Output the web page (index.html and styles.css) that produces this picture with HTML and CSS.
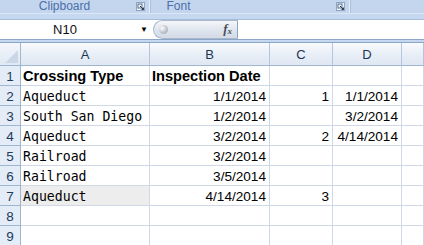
FILE: index.html
```html
<!DOCTYPE html>
<html lang="en">
  <head>
    <meta charset="UTF-8" />
    <meta name="viewport" content="width=device-width, initial-scale=1.0" />
    <title>Book1 - Excel</title>
    <link rel="stylesheet" href="styles.css">
  </head>
  <body>
    <!-- ribbon group labels -->
    <div class="ribbon">
      <div class="group clipboard">
        <span class="group-name">Clipboard</span>
        <svg class="launcher" width="9" height="9" viewBox="0 0 9 9">
          <rect x="0.5" y="0.5" width="8" height="8" fill="#eef3fa" stroke="#8ea6c4" />
          <rect x="2" y="2" width="4" height="4" fill="none" stroke="#5a6f8c" />
          <path d="M4 4 L7.5 7.5 M5.5 7.5 H7.5 V5.5" stroke="#2b3e5c" fill="none" />
        </svg>
      </div>
      <div class="group font">
        <span class="group-name">Font</span>
        <svg class="launcher" width="9" height="9" viewBox="0 0 9 9">
          <rect x="0.5" y="0.5" width="8" height="8" fill="#eef3fa" stroke="#8ea6c4" />
          <rect x="2" y="2" width="4" height="4" fill="none" stroke="#5a6f8c" />
          <path d="M4 4 L7.5 7.5 M5.5 7.5 H7.5 V5.5" stroke="#2b3e5c" fill="none" />
        </svg>
      </div>
      <div class="group rest"></div>
    </div>

    <!-- formula bar -->
    <div class="formula-bar">
      <div class="name-box">
        <span class="cell-ref">N10</span>
        <span class="drop">&#9660;</span>
      </div>
      <div class="pill">
        <span class="knob"></span>
        <span class="fx">f<sub>x</sub></span>
      </div>
      <div class="formula-input"></div>
    </div>

    <!-- sheet -->
    <div class="sheet">
      <div class="corner"><span class="corner-tri"></span></div>
      <div class="col-head">A</div>
      <div class="col-head">B</div>
      <div class="col-head">C</div>
      <div class="col-head">D</div>
      <div class="col-head"></div>

      <div class="row-head">1</div>
      <div class="cell bold">Crossing Type</div>
      <div class="cell bold">Inspection Date</div>
      <div class="cell"></div>
      <div class="cell"></div>
      <div class="cell"></div>

      <div class="row-head">2</div>
      <div class="cell mono">Aqueduct</div>
      <div class="cell num">1/1/2014</div>
      <div class="cell num">1</div>
      <div class="cell num">1/1/2014</div>
      <div class="cell"></div>

      <div class="row-head">3</div>
      <div class="cell mono">South San Diego</div>
      <div class="cell num">1/2/2014</div>
      <div class="cell num"></div>
      <div class="cell num">3/2/2014</div>
      <div class="cell"></div>

      <div class="row-head">4</div>
      <div class="cell mono">Aqueduct</div>
      <div class="cell num">3/2/2014</div>
      <div class="cell num">2</div>
      <div class="cell num">4/14/2014</div>
      <div class="cell"></div>

      <div class="row-head">5</div>
      <div class="cell mono">Railroad</div>
      <div class="cell num">3/2/2014</div>
      <div class="cell"></div>
      <div class="cell"></div>
      <div class="cell"></div>

      <div class="row-head">6</div>
      <div class="cell mono">Railroad</div>
      <div class="cell num">3/5/2014</div>
      <div class="cell"></div>
      <div class="cell"></div>
      <div class="cell"></div>

      <div class="row-head">7</div>
      <div class="cell mono hover">Aqueduct</div>
      <div class="cell num">4/14/2014</div>
      <div class="cell num">3</div>
      <div class="cell"></div>
      <div class="cell"></div>

      <div class="row-head">8</div>
      <div class="cell"></div>
      <div class="cell"></div>
      <div class="cell"></div>
      <div class="cell"></div>
      <div class="cell"></div>

      <div class="row-head last">9</div>
      <div class="cell"></div>
      <div class="cell"></div>
      <div class="cell"></div>
      <div class="cell"></div>
      <div class="cell"></div>
    </div>
  </body>
</html>
```

FILE: styles.css
```css
* {
  margin: 0;
  padding: 0;
  box-sizing: border-box;
}

body {
  width: 424px;
  height: 245px;
  overflow: hidden;
  font-family: "Liberation Sans", Arial, sans-serif;
  background-color: #c5d8ef;
}

/* RIBBON */
.ribbon {
  display: flex;
  height: 14px;
  border-bottom: 1px solid #dce7f5;
  background-color: #c3d6ee;
}

.group {
  position: relative;
  display: flex;
  justify-content: center;
  align-items: center;
  height: 13px;
  border-right: 1px solid #e6eef8;
  box-shadow: 1px 0 0 #a9c0dc;
  margin-right: 2px;
}

.clipboard {
  width: 150px;
}

.font {
  width: 198px;
}

.rest {
  flex: 1;
  border-right: none;
  box-shadow: none;
}

.group-name {
  font-size: 12px;
  color: #4c6fa8;
  line-height: 13px;
}

.clipboard .group-name {
  margin-right: 20px;
}

.font .group-name {
  margin-right: 144px;
}

.launcher {
  position: absolute;
  right: 4px;
  top: 2px;
}

/* FORMULA BAR */
.formula-bar {
  display: flex;
  height: 21px;
  margin-top: 5px;
  background-color: #fff;
  border-top: 1px solid #a5bcd8;
  border-bottom: 1px solid #8aa5c6;
}

.name-box {
  width: 153px;
  display: flex;
  align-items: center;
  font-size: 13px;
  color: #111;
}

.cell-ref {
  width: 130px;
  text-align: center;
}

.drop {
  font-size: 8px;
  margin-left: 10px;
  color: #000;
}

.pill {
  width: 85px;
  display: flex;
  align-items: center;
  justify-content: space-between;
  padding: 0 5px 0 5px;
  border-radius: 10px 0 0 10px;
  border: 1px solid #a9b8cc;
  border-right: 1px solid #8ea3be;
  background: linear-gradient(#f4f6f9, #dfe5ee 55%, #d3dbe7);
}

.knob {
  width: 9px;
  height: 9px;
  border-radius: 50%;
  background: radial-gradient(circle at 35% 35%, #ffffff, #b9bfc8 60%, #9aa1ab);
}

.fx {
  font-family: "Liberation Serif", "Times New Roman", serif;
  font-style: italic;
  font-weight: bold;
  font-size: 13px;
  color: #4a4f57;
  margin-bottom: 2px;
}

.fx sub {
  font-size: 9px;
  vertical-align: -1px;
}

.formula-input {
  flex: 1;
}

/* SHEET */
.sheet {
  display: grid;
  grid-template-columns: 21px 129px 120px 63px 69px 1fr;
  grid-template-rows: 23px repeat(9, 20px);
  margin-top: 2px;
  background-color: #fff;
  border-top: 1px solid #8ba6c6;
}

.corner {
  position: relative;
  background: linear-gradient(#f4f7fb, #dfe8f4);
  border-right: 1px solid #9eb6ce;
  border-bottom: 1px solid #9eb6ce;
}

.corner-tri {
  position: absolute;
  right: 2px;
  bottom: 2px;
  width: 0;
  height: 0;
  border-left: 13px solid transparent;
  border-bottom: 13px solid #c9d7e8;
}

.col-head {
  display: flex;
  align-items: center;
  justify-content: center;
  font-size: 13px;
  color: #1b3556;
  background: linear-gradient(#f9fbfd, #e9eff7 50%, #dfe7f2);
  border-right: 1px solid #b4c6dc;
  border-bottom: 1px solid #9eb6ce;
}

.row-head {
  display: flex;
  align-items: flex-end;
  justify-content: center;
  padding-bottom: 1px;
  font-size: 13.5px;
  color: #213a5c;
  background-color: #e4ecf7;
  border-right: 1px solid #9eb6ce;
  border-bottom: 1px solid #9eb6ce;
}

.row-head.last {
  border-bottom: 1px solid #f29536;
}

.cell {
  display: flex;
  align-items: flex-end;
  padding: 0 3px 1px 2px;
  color: #000;
  white-space: nowrap;
  border-right: 1px solid #d0d7e5;
  border-bottom: 1px solid #d0d7e5;
}

.bold {
  font-weight: bold;
  font-size: 14.6px;
}

.mono {
  font-family: "DejaVu Sans Mono", "Liberation Mono", monospace;
  font-size: 13.2px;
}

.num {
  justify-content: flex-end;
  font-size: 13.6px;
}

.hover {
  background-color: #ededed;
}
```
